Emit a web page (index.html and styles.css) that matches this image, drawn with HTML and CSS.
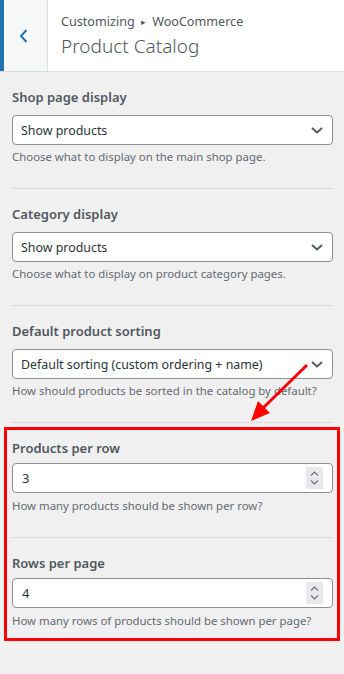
FILE: index.html
```html
<!DOCTYPE html>
<html lang="en">
<head>
    <meta charset="UTF-8">
    <meta name="viewport" content="width=device-width, initial-scale=1.0">
    <title>Product Catalog</title>
    <link rel="stylesheet" href="styles.css">
</head>
<body>
    <header class="section-header">
        <button class="back-button" aria-label="Back">
            <svg width="9" height="14" viewBox="0 0 9 14"><path d="M7.5 1 L2 7 L7.5 13" fill="none" stroke="#2271b1" stroke-width="2"/></svg>
        </button>
        <div class="section-title">
            <div class="crumbs">Customizing <span class="crumb-sep">&#9656;</span> WooCommerce</div>
            <h1>Product Catalog</h1>
        </div>
    </header>

    <main class="panel">
        <div class="control">
            <label class="control-title">Shop page display</label>
            <div class="select-box">
                <select><option>Show products</option></select>
                <svg width="12" height="7" viewBox="0 0 12 7"><path d="M1 1 L6 5.5 L11 1" fill="none" stroke="#50575e" stroke-width="1.8"/></svg>
            </div>
            <p class="description">Choose what to display on the main shop page.</p>
        </div>

        <div class="control">
            <label class="control-title">Category display</label>
            <div class="select-box">
                <select><option>Show products</option></select>
                <svg width="12" height="7" viewBox="0 0 12 7"><path d="M1 1 L6 5.5 L11 1" fill="none" stroke="#50575e" stroke-width="1.8"/></svg>
            </div>
            <p class="description">Choose what to display on product category pages.</p>
        </div>

        <div class="control">
            <label class="control-title">Default product sorting</label>
            <div class="select-box">
                <select><option>Default sorting (custom ordering + name)</option></select>
                <svg width="12" height="7" viewBox="0 0 12 7"><path d="M1 1 L6 5.5 L11 1" fill="none" stroke="#50575e" stroke-width="1.8"/></svg>
            </div>
            <p class="description">How should products be sorted in the catalog by default?</p>
        </div>

        <div class="highlight">
            <div class="control number-control">
                <label class="control-title">Products per row</label>
                <div class="number-box">
                    <input type="text" value="3">
                    <span class="spinner">
                        <svg width="9" height="16" viewBox="0 0 9 16"><path d="M1 5.5 L4.5 2 L8 5.5 M1 10.5 L4.5 14 L8 10.5" fill="none" stroke="#6d6d75" stroke-width="1.1"/></svg>
                    </span>
                </div>
                <p class="description">How many products should be shown per row?</p>
            </div>
            <div class="control number-control last">
                <label class="control-title">Rows per page</label>
                <div class="number-box">
                    <input type="text" value="4">
                    <span class="spinner">
                        <svg width="9" height="16" viewBox="0 0 9 16"><path d="M1 5.5 L4.5 2 L8 5.5 M1 10.5 L4.5 14 L8 10.5" fill="none" stroke="#6d6d75" stroke-width="1.1"/></svg>
                    </span>
                </div>
                <p class="description">How many rows of products should be shown per page?</p>
            </div>
        </div>
    </main>

    <!-- annotation arrow pointing at the highlighted box -->
    <svg class="annotation-arrow" width="344" height="674" viewBox="0 0 344 674">
        <line x1="307" y1="365" x2="262" y2="409" stroke="#ff0000" stroke-width="3"/>
        <polygon points="251,421 258,401 270,413" fill="#ff0000"/>
    </svg>
</body>
</html>
```

FILE: styles.css
```css
body {
    margin: 0;
    background-color: #f0f0f1;
    color: #50575e;
    font-family: "Noto Sans", "Open Sans", sans-serif;
    position: relative;
    min-height: 674px;
}

.section-header {
    display: flex;
    background-color: white;
    border-bottom: 1px solid #dcdcde;
    height: 71px;
}
.back-button {
    width: 48px;
    padding: 0 0 0 15px;
    border: none;
    border-left: 4px solid #2271b1;
    border-right: 1px solid #dcdcde;
    background-color: #f6f7f7;
    display: flex;
    align-items: center;
    cursor: pointer;
}
.back-button svg {
    margin-top: 1px;
}
.section-title {
    padding: 12px 0 0 13px;
}
.crumbs {
    font-size: 12.6px;
    line-height: 20px;
}
.crumb-sep {
    font-size: 9px;
    vertical-align: 1px;
    margin: 0 3px;
}
h1 {
    margin: 0;
    font-size: 19px;
    font-weight: 300;
    line-height: 28px;
}

.panel {
    padding: 15px 11px 0 12px;
}
.control {
    padding-bottom: 22px;
    border-bottom: 1px dotted #c3c4c7;
    margin-bottom: 15px;
}
.control-title {
    display: block;
    font-size: 13px;
    font-weight: 600;
    line-height: 20px;
}
.select-box {
    margin-top: 8px;
    height: 30px;
    box-sizing: border-box;
    border: 1px solid #8c8f94;
    border-radius: 4px;
    background-color: white;
    display: flex;
    align-items: center;
    padding: 0 9px 0 0;
}
.select-box select {
    flex: 1;
    appearance: none;
    border: none;
    background: transparent;
    font-family: inherit;
    font-size: 12.4px;
    color: #2c3338;
    padding: 0 0 0 8px;
    height: 28px;
    outline: none;
}
.description {
    margin: 3px 0 0;
    font-size: 11.4px;
    line-height: 18px;
    color: #646970;
}

.highlight {
    margin: -11px -7px 0 -8px;
    padding: 8px 4px 8px 5px;
    border: 3px solid #ff0000;
}
.number-control .number-box {
    margin-top: 5px;
}
.number-control .description {
    margin-top: 4px;
}
.control.last {
    padding-bottom: 0;
    border-bottom: none;
    margin-bottom: 0;
}
.number-box {
    height: 30px;
    box-sizing: border-box;
    border: 1px solid #8c8f94;
    border-radius: 4px;
    background-color: white;
    display: flex;
    align-items: center;
    padding-right: 9px;
}
.number-box input {
    flex: 1;
    min-width: 0;
    border: none;
    outline: none;
    background: transparent;
    font-family: inherit;
    font-size: 13px;
    color: #2c3338;
    padding: 0 0 0 9px;
}
.spinner {
    width: 17px;
    height: 22px;
    background-color: #e9e9ed;
    display: flex;
    align-items: center;
    justify-content: center;
}

.annotation-arrow {
    position: absolute;
    top: 0;
    left: 0;
    pointer-events: none;
}
```
